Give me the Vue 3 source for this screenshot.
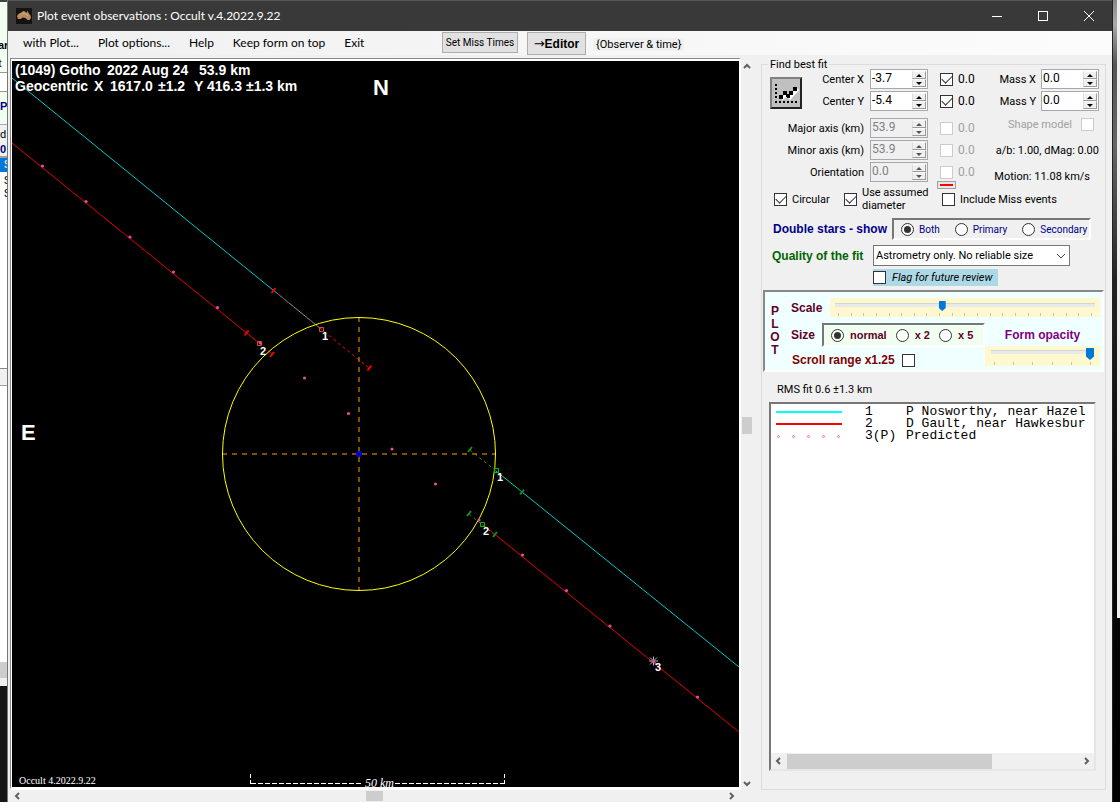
<script setup>
import { ref } from 'vue'

const menus = ['with Plot...', 'Plot options...', 'Help', 'Keep form on top', 'Exit']

const fitRows = ref([
  { id: 'cx', label: 'Center X', value: '-3.7', sigma: '0.0', on: true, off: false, row: 1 },
  { id: 'cy', label: 'Center Y', value: '-5.4', sigma: '0.0', on: true, off: false, row: 2 },
  { id: 'major', label: 'Major axis (km)', value: '53.9', sigma: '0.0', on: false, off: true, row: 4 },
  { id: 'minor', label: 'Minor axis (km)', value: '53.9', sigma: '0.0', on: false, off: true, row: 5 },
  { id: 'orient', label: 'Orientation', value: '0.0', sigma: '0.0', on: false, off: true, row: 6 }
])
const massRows = ref([
  { id: 'mx', label: 'Mass X', value: '0.0' },
  { id: 'my', label: 'Mass Y', value: '0.0' }
])

const circular = ref(true)
const assumed = ref(true)
const misses = ref(false)
const shape = ref(false)
const flag = ref(false)
const scrollRange = ref(false)
const star = ref('Both')
const size = ref('normal')
const scale = ref(8.2)
const opacity = ref(100)

const predicted = [
  [42.5, 166], [86, 201.5], [130, 237], [173.5, 272], [217.5, 307.5], [260.5, 343],
  [304.5, 378], [348.5, 413.5], [392, 449], [435.5, 484], [479, 520], [522.5, 555],
  [566.5, 590.5], [610, 626], [653.5, 661], [697.5, 697]
]
const redTicks = [[273.5, 290.5], [369.5, 368], [246.5, 333], [272, 354.5]]
const greenTicks = [[470, 449.5], [522, 492], [469, 513.5], [495, 534.5]]
const chordLabels = [
  [322, 340, '1'], [260, 355, '2'], [497, 481, '1'], [483, 535, '2'], [655, 671, '3']
]
const chords = [
  { kind: 'cyan', no: '1', name: 'P Nosworthy, near Hazel' },
  { kind: 'red', no: '2', name: 'D Gault, near Hawkesbur' },
  { kind: 'dots', no: '3(P)', name: 'Predicted' }
]
</script>

<template>
  <div class="desktop">
    <div class="behind-left" aria-hidden="true">
      <div class="bl green"><b>ar</b><b class="maroon">t</b></div>
      <div class="bl gap"></div>
      <div class="bl green2"><b>P|</b></div>
      <div class="bl head"><span>d</span><b>0</b></div>
      <div class="bl sel">S</div>
      <div class="bl rows"><span>S</span><span>S</span></div>
      <div class="bl bar"></div>
      <div class="bl blank"></div>
      <div class="bl bar2"></div>
      <div class="bl dark"></div>
    </div>

    <div class="window">
      <header class="titlebar">
        <svg class="app-icon" viewBox="0 0 16 16" aria-hidden="true">
          <rect width="16" height="16" fill="#15130f" />
          <path d="M1 8 3 5.500 5.500 4.500 7 3 9 3.200 9.500 4.500 10.700 4.500 11.500 2.800 12.500 5 14.500 7.500 15 10 13.500 12 11.500 12 9.500 10 7 9.600 4.500 11 2 11Z" fill="#b98c62" />
          <path d="M4 7 7 5 10 6 12 8" fill="none" stroke="#d3a777" />
        </svg>
        <h1>Plot event observations : Occult v.4.2022.9.22</h1>
        <div class="win-buttons">
          <button aria-label="Minimize"><svg viewBox="0 0 12 12"><path d="M1 6.500H11" /></svg></button>
          <button aria-label="Maximize"><svg viewBox="0 0 12 12"><rect x="1.500" y="1.500" width="9" height="9" /></svg></button>
          <button aria-label="Close"><svg viewBox="0 0 12 12"><path d="M1 1 11 11M11 1 1 11" /></svg></button>
        </div>
      </header>

      <div class="menubar">
        <nav>
          <button v-for="m in menus" :key="m">{{ m }}</button>
        </nav>
        <button class="tool small">Set Miss Times</button>
        <button class="tool editor"><span>→</span>Editor</button>
        <span class="observer">{Observer &amp; time}</span>
      </div>

      <main>
        <section class="plot-area">
          <div class="plot-frame">
            <svg class="plot" viewBox="12 61 727 726" preserveAspectRatio="xMidYMid meet" role="img" aria-label="Occultation chords">
              <g fill="none">
                <path d="M12 78 321 329M496 471 739 667" stroke="#00c8c8" />
                <path d="M12 143 259 343M482 524 739 732" stroke="#e60000" />
                <path d="M273 290 321 329 369 368M259 343 272 354" stroke="#ff0000" stroke-dasharray="3 3" />
                <path d="M470 450 522 492M469 514 495 535" stroke="#1e8a1e" stroke-dasharray="3 3" />
                <g stroke="#ffa500" stroke-dasharray="5 5">
                  <path d="M222 454H496" />
                  <path d="M359 317V591" />
                </g>
                <circle cx="359" cy="454" r="136.500" stroke="#ffff00" />
                <circle cx="359" cy="454" r="2" stroke="#0000ff" stroke-width="2" />
                <path v-for="(t, i) in redTicks" :key="'r' + i" :d="`M${t[0] - 2} ${t[1] + 2.5}l4-5`" stroke="#ff0000" stroke-width="2" />
                <path v-for="(t, i) in greenTicks" :key="'g' + i" :d="`M${t[0] - 2} ${t[1] + 2.5}l4-5`" stroke="#1f8b24" stroke-width="2" />
                <path d="M319.500 327.500h4v4h-4zM257.500 341.500h4v4h-4z" stroke="#e04838" />
                <path d="M494.500 468.500h4v4h-4zM480.500 522.500h4v4h-4z" stroke="#00c000" />
                <path d="M653.500 656.500v9M649 661h9M650 657.500l7 7M657 657.500l-7 7" stroke="#a8b4c4" />
              </g>
              <circle v-for="(p, i) in predicted" :key="'p' + i" :cx="p[0]" :cy="p[1]" r="1.600" fill="#e0509a" />
              <g class="bold" fill="#fff">
                <g class="heading">
                  <text x="15" y="75">(1049) Gotho</text>
                  <text x="107" y="75">2022 Aug 24</text>
                  <text x="199" y="75">53.9 km</text>
                  <text x="15" y="91">Geocentric</text>
                  <text x="94" y="91">X</text>
                  <text x="110" y="91">1617.0</text>
                  <text x="158" y="91">±1.2</text>
                  <text x="194" y="91">Y</text>
                  <text x="207" y="91">416.3</text>
                  <text x="246" y="91">±1.3 km</text>
                </g>
                <text class="compass" x="373" y="95">N</text>
                <text class="compass" x="21" y="440">E</text>
                <text v-for="(l, i) in chordLabels" :key="'l' + i" class="chord-no" :x="l[0]" :y="l[1]">{{ l[2] }}</text>
              </g>
              <g class="serif" fill="#fff">
                <text x="19" y="784">Occult 4.2022.9.22</text>
                <text class="km" x="365" y="787">50 km</text>
              </g>
              <path d="M250.500 774V784" fill="none" stroke="#fff" stroke-dasharray="4 2" />
              <path d="M504.500 774V784" fill="none" stroke="#fff" stroke-dasharray="4 2" />
              <path d="M251 783.500H362M395 783.500H504" fill="none" stroke="#fff" stroke-dasharray="5 2" />
            </svg>
          </div>
          <div class="vbar">
            <button aria-label="Scroll up"><svg viewBox="0 0 8 8"><path d="M1 6 4 3 7 6" /></svg></button>
            <div class="track"><i></i></div>
            <button aria-label="Scroll down"><svg viewBox="0 0 8 8"><path d="M1 2 4 5 7 2" /></svg></button>
          </div>
          <div class="hbar">
            <button aria-label="Scroll left"><svg viewBox="0 0 8 8"><path d="M6 1 3 4 6 7" /></svg></button>
            <div class="track"><i></i></div>
            <button aria-label="Scroll right"><svg viewBox="0 0 8 8"><path d="M2 1 5 4 2 7" /></svg></button>
          </div>
        </section>

        <fieldset class="fit">
          <legend>Find best fit</legend>

          <div class="params">
            <div class="grid">
              <button class="solve" aria-label="Fit">
                <svg viewBox="0 0 28 28" aria-hidden="true">
                  <path d="M3 5h2v2H3zM3 9h2v2H3zM3 13h2v2H3zM3 17h2v2H3zM3 22h2v2H3zM7 22h2v2H7zM11 22h2v2h-2zM15 22h2v2h-2zM19 22h2v2h-2zM23 22h2v2h-2z" />
                  <path d="M10 20 14 16 18 19 26 10" fill="none" stroke="#fff" stroke-width="3" />
                  <path d="M7 16h4v4H7zM11 12h4v4h-4zM15 16h3v3h-3zM17 12h4v4h-4zM21 8h4v4h-4zM14 15h3v3h-3z" />
                </svg>
              </button>
              <template v-for="r in fitRows" :key="r.id">
                <label class="name" :class="'row' + r.row" :for="r.id">{{ r.label }}</label>
                <div class="spin" :class="['row' + r.row, { off: r.off }]">
                  <input :id="r.id" v-model="r.value" type="text" :disabled="r.off" />
                  <span><button :disabled="r.off" :aria-label="r.label + ' up'"></button><button class="down" :disabled="r.off" :aria-label="r.label + ' down'"></button></span>
                </div>
                <label class="sigma" :class="['row' + r.row, { off: r.off }]"><input v-model="r.on" type="checkbox" :disabled="r.off" />{{ r.sigma }}</label>
              </template>
              <button class="colour" aria-label="Line colour"><i></i></button>
            </div>
            <div class="extra">
              <div v-for="r in massRows" :key="r.id" class="mass">
                <label :for="r.id">{{ r.label }}</label>
                <div class="spin">
                  <input :id="r.id" v-model="r.value" type="text" />
                  <span><button :aria-label="r.label + ' up'"></button><button class="down" :aria-label="r.label + ' down'"></button></span>
                </div>
              </div>
              <label class="shape">Shape model<input v-model="shape" type="checkbox" disabled /></label>
              <p class="ab">a/b: 1.00, dMag: 0.00</p>
              <p class="motion">Motion: 11.08 km/s</p>
            </div>
          </div>

          <div class="checks">
            <label><input v-model="circular" type="checkbox" />Circular</label>
            <label class="two"><input v-model="assumed" type="checkbox" /><span>Use assumed<br />diameter</span></label>
            <label><input v-model="misses" type="checkbox" />Include Miss events</label>
          </div>

          <div class="double" role="radiogroup" aria-labelledby="dbl">
            <b id="dbl">Double stars - show</b>
            <div class="sunken">
              <label v-for="s in ['Both', 'Primary', 'Secondary']" :key="s"><input v-model="star" type="radio" name="star" :value="s" />{{ s }}</label>
            </div>
          </div>

          <div class="quality">
            <label for="quality">Quality of the fit</label>
            <div class="choose">
              <select id="quality"><option>Astrometry only. No reliable size</option></select>
              <svg viewBox="0 0 10 6" aria-hidden="true"><path d="M1 1 5 5 9 1" /></svg>
            </div>
          </div>
          <label class="flag"><input v-model="flag" type="checkbox" />Flag for future review</label>

          <section class="plot-box">
            <div class="plot-word"><span>P</span><span>L</span><span>O</span><span>T</span></div>
            <div class="plot-controls">
              <div class="scale-row">
                <label for="scale">Scale</label>
                <div class="slider">
                  <input id="scale" v-model="scale" type="range" min="0" max="20" step="any" />
                  <div class="ticks"><i v-for="n in 21" :key="n"></i></div>
                </div>
              </div>
              <div class="lower">
                <div class="lower-left">
                  <div class="size-row">
                    <span>Size</span>
                    <div class="sunken sizes">
                      <label v-for="s in ['normal', 'x 2', 'x 5']" :key="s"><input v-model="size" type="radio" name="size" :value="s" />{{ s }}</label>
                    </div>
                  </div>
                  <label class="range">Scroll range x1.25<input v-model="scrollRange" type="checkbox" /></label>
                </div>
                <div class="opacity">
                  <label for="opacity">Form opacity</label>
                  <div class="slider big">
                    <input id="opacity" v-model="opacity" type="range" min="0" max="100" />
                    <div class="ticks"><i v-for="n in 6" :key="n"></i></div>
                  </div>
                </div>
              </div>
            </div>
          </section>

          <p class="rms">RMS fit 0.6 ±1.3 km</p>

          <div class="list">
            <ul>
              <li v-for="c in chords" :key="c.no">
                <svg viewBox="0 0 66 12" aria-hidden="true">
                  <path v-if="c.kind === 'cyan'" d="M0 6H66" stroke="#00ffff" stroke-width="2" />
                  <path v-else-if="c.kind === 'red'" d="M0 6H66" stroke="#ff0000" stroke-width="2" />
                  <g v-else fill="none" stroke="#ff69b4"><circle v-for="n in 5" :key="n" :cx="15 * n - 12.5" cy="6.500" r="1" /></g>
                </svg>
                <span>{{ c.no }}</span><span>{{ c.name }}</span>
              </li>
            </ul>
            <div class="hbar inner">
              <button aria-label="Scroll list left"><svg viewBox="0 0 8 8"><path d="M6 1 3 4 6 7" /></svg></button>
              <div class="track"><i></i></div>
              <button aria-label="Scroll list right"><svg viewBox="0 0 8 8"><path d="M2 1 5 4 2 7" /></svg></button>
            </div>
          </div>
        </fieldset>
      </main>
    </div>
    <div class="behind-right" aria-hidden="true"><i></i></div>
  </div>
</template>

<style>
body { margin: 0; background: #fff; }
</style>

<style scoped>
* { box-sizing: border-box; }
.desktop { display: flex; height: calc(100vh - 8px); min-height: 720px; overflow: hidden; font: 11px/13px Roboto, "Liberation Sans", sans-serif; color: #000; }
button { font: inherit; color: inherit; padding: 0; margin: 0; border: 0; background: none; }
input { margin: 0; font: inherit; }
p, h1, ul { margin: 0; padding: 0; font-weight: normal; }
b { font-family: "Liberation Sans", sans-serif; }

.behind-left { flex: 0 0 8px; overflow: hidden; display: flex; flex-direction: column; background: #fff; border-right: 1px solid #777; }
.bl { flex: none; overflow: hidden; display: flex; flex-direction: column; font-size: 11px; }
.green { height: 73px; background: #f0fff0; border-top: 2px solid #444; border-bottom: 1px solid #999; padding-top: 37px; gap: 5px; }
.green b { margin-left: -2px; }
.maroon { color: #800040; }
.gap { height: 18px; background: #fff; }
.green2 { height: 34px; background: #f0fff0; border-top: 1px solid #999; border-bottom: 1px solid #aaa; padding-top: 8px; color: #000080; }
.head { height: 33px; background: #f0f0f0; border-bottom: 2px solid #a0a0a0; padding-top: 3px; gap: 2px; }
.head b { color: #000080; }
.sel { height: 14px; background: #0078d7; color: #fff; padding-left: 4px; }
.rows { height: 197px; padding: 2px 0 0 4px; border-bottom: 1px solid #828790; }
.bar { height: 17px; background: #f0f0f0; border-bottom: 1px solid #a0a0a0; }
.blank { flex: 1 1 275px; }
.bar2 { height: 24px; background: #cdcdcd; border-bottom: 8px solid #eee; }
.dark { height: 116px; background: #161616; }

.behind-right { flex: 0 0 8px; display: flex; background: linear-gradient(#888 0, #aaa 3%, #555 8%, #666 18%, #222 35%, #0a0a0a 60%, #000); border-left: 1px solid #222; }
.behind-right i { margin-left: auto; width: 3px; height: 77%; background: #eee; }

.window { flex: 1; min-width: 0; display: flex; flex-direction: column; background: #f0f0f0; }
.titlebar { flex: 0 0 31px; display: flex; align-items: center; padding-left: 8px; background: #393939; border-top: 1px solid #555; color: #fff; }
.app-icon { width: 16px; height: 16px; margin-right: 5px; }
.titlebar h1 { font: 12px/16px Lato, "Noto Sans", sans-serif; }
.win-buttons { margin-left: auto; display: flex; }
.win-buttons button { width: 46px; height: 30px; display: grid; place-items: center; }
.win-buttons svg { width: 12px; height: 12px; fill: none; stroke: #fff; }

.menubar { flex: 0 0 24px; display: flex; align-items: flex-start; background: linear-gradient(90deg, #f0f0f0, #fcfcfc); }
.menubar nav { flex: 0 0 434px; height: 24px; padding-left: 15px; display: flex; align-items: center; gap: 19px; font: 12px/16px Lato, "Noto Sans", sans-serif; }
.tool { background: #e1e1e1; border: 1px solid #adadad; margin-top: 1px; }
.small { width: 76px; height: 21px; font-size: 10px; }
.editor { width: 59px; height: 23px; margin-left: 9px; font: bold 12px/16px "Liberation Sans", sans-serif; }
.editor span { font: 13px/16px "DejaVu Sans", sans-serif; }
.observer { margin: 7px 0 0 7px; padding: 0 3px; background: #f0f0f0; }

main { flex: 1; min-height: 0; display: flex; padding: 3px 6px 0 2px; }
.plot-area { flex: 1; min-width: 0; display: grid; grid-template-columns: minmax(0, 1fr) 16px; grid-template-rows: minmax(0, 1fr) 12px; }
.plot-frame { min-height: 0; border: 1px solid; border-color: #888 #fff #fff #888; border-right-width: 2px; border-bottom-width: 3px; padding: 2px 0 0 1px; background: #fff; }
.plot { display: block; width: 100%; height: 100%; background: #000; }
.bold { font-family: "Liberation Sans", sans-serif; font-weight: bold; }
.heading { font-size: 14px; }
.compass { font-size: 22px; }
.chord-no { font-size: 11px; }
.serif { font: 10px "Liberation Serif", serif; }
.km { font-size: 12px; font-style: italic; }

.vbar { display: flex; flex-direction: column; align-items: center; padding: 2px 4px 0 0; }
.hbar { display: flex; align-items: center; padding-right: 2px; }
.vbar button, .hbar button { display: grid; place-items: center; width: 14px; height: 12px; }
.vbar svg, .hbar svg { width: 8px; height: 8px; fill: none; stroke: #606060; stroke-width: 2; }
.track { flex: 1; display: flex; align-items: center; justify-content: center; align-self: stretch; }
.vbar .track i { width: 10px; height: 17px; background: #cdcdcd; }
.hbar .track i { width: 17px; height: 10px; background: #cdcdcd; }

.fit { flex: 0 0 345px; min-width: 0; margin: 1px 0 12px 4px; padding: 0 1px; border: 1px solid #dcdcdc; display: flex; flex-direction: column; }
.fit legend { margin-left: 5px; padding: 1px 2px 0; line-height: 10px; }

.params { display: flex; justify-content: space-between; margin-top: -1px; padding: 0 5px 0 7px; }
.grid { display: grid; grid-template-columns: 94px 58px 36px; grid-template-rows: 20px 20px 3px 20px 20px 20px 6px; row-gap: 2px; align-items: center; }
.row1 { grid-row: 1; } .row2 { grid-row: 2; } .row4 { grid-row: 4; } .row5 { grid-row: 5; } .row6 { grid-row: 6; }
.name { grid-column: 1; justify-self: end; z-index: 1; }
.spin { grid-column: 2; margin-left: 6px; width: 58px; height: 20px; display: flex; background: #fff; border: 1px solid #a5a8ad; }
.spin input { flex: 1; min-width: 0; border: 0; padding: 0 0 2px 1px; background: none; font-size: 12px; color: inherit; }
.spin span { width: 16px; display: flex; flex-direction: column; padding: 1px; }
.spin span button { flex: 1; background: #f0f0f0; border: 1px solid; border-color: #fafafa #9a9a9a #9a9a9a #ddd; display: grid; place-items: center; }
.spin span button::before { content: ""; border: 3px solid transparent; border-top: 0; border-bottom-color: currentColor; }
.spin span button.down::before { border: 3px solid transparent; border-bottom: 0; border-top-color: currentColor; }
.spin.off { background: #f0f0f0; color: #808080; }
.off button { color: #555; }
.sigma { grid-column: 3; margin-left: 18px; display: flex; align-items: center; gap: 5px; font-size: 12px; white-space: nowrap; }
.sigma.off { color: #a0a0a0; }
.solve { grid-column: 1; grid-row: 1 / 3; align-self: end; width: 32px; height: 32px; margin-bottom: 2px; background: #c0c0c0; border: 2px solid; border-color: #808080 #222 #222 #808080; }
.solve svg { display: block; width: 28px; height: 28px; }
.colour { grid-column: 3; grid-row: 7; width: 19px; height: 8px; margin: -4px 0 0 15px; border: 1px solid #a0a0a0; background: #e8e8e8; display: grid; place-items: center; }
.colour i { width: 13px; height: 2px; background: #f00; }

.extra { display: flex; flex-direction: column; gap: 2px; align-items: flex-end; }
.mass { display: flex; align-items: center; height: 20px; }
.mass .spin { margin-left: 5px; }
.shape { height: 22px; display: flex; align-items: center; gap: 9px; color: #a0a0a0; padding-right: 5px; }
.ab { line-height: 28px; }
.motion { line-height: 20px; padding-right: 9px; }

input[type="checkbox"], input[type="radio"] { appearance: none; flex: none; width: 13px; height: 13px; border: 1px solid #333; background: #fff; display: grid; place-items: center; }
input[type="checkbox"]:checked::before { content: ""; width: 9px; height: 5px; margin-top: -3px; border: solid #333; border-width: 0 0 1px 1px; rotate: -45deg; }
input[type="checkbox"]:disabled { border-color: #ccc; }
input[type="radio"] { border-radius: 50%; }
input[type="radio"]:checked::before { content: ""; width: 7px; height: 7px; border-radius: 50%; background: #333; }

.checks { display: grid; grid-template-columns: 70px 98px auto; padding-left: 11px; height: 24px; margin-top: -4px; align-items: center; }
.checks label { display: flex; align-items: center; gap: 5px; white-space: nowrap; }

.double { display: flex; align-items: center; padding-left: 10px; margin-top: 8px; color: #00008b; }
.double b { width: 119px; font-size: 12px; white-space: nowrap; }
.sunken { display: flex; align-items: center; border: 2px solid; border-color: #777 #fff #fff #777; }
.double .sunken { width: 199px; height: 22px; padding-left: 7px; font-size: 10px; gap: 15px; }
.sunken label { display: flex; align-items: center; gap: 5px; white-space: nowrap; }

.quality { display: flex; align-items: center; padding-left: 9px; margin-top: 5px; }
.quality label { width: 101px; color: #006400; font: bold 12px/14px "Liberation Sans", sans-serif; white-space: nowrap; }
.choose { position: relative; width: 197px; height: 21px; }
.choose select { appearance: none; width: 100%; height: 100%; padding: 0 20px 0 2px; border: 1px solid #777; border-radius: 0; background: #fff; font: inherit; color: #000; }
.choose svg { position: absolute; right: 4px; top: 8px; width: 10px; height: 6px; fill: none; stroke: #444; pointer-events: none; }
.flag { align-self: flex-start; margin: 3px 0 0 110px; width: 125px; height: 17px; display: flex; align-items: center; gap: 6px; background: #add8e6; font-style: italic; white-space: nowrap; }

.plot-box { display: flex; margin-top: 4px; height: 82px; border: 2px solid; border-color: #888 #fff #fff #888; background: #f0ffff; font: bold 12px/14px "Liberation Sans", sans-serif; color: #60002c; }
.plot-word { width: 20px; padding-top: 13px; display: flex; flex-direction: column; align-items: center; line-height: 13px; }
.plot-controls { flex: 1; min-width: 0; padding: 6px 2px 0 6px; display: flex; flex-direction: column; }
.scale-row { display: flex; align-items: center; }
.scale-row label { width: 39px; }
.slider { flex: 1; height: 19px; padding: 3px 5px 0; background: #fff8ce; display: flex; flex-direction: column; justify-content: space-between; }
.slider input { appearance: none; display: block; width: 100%; height: 10px; background: linear-gradient(#d4d4d4, #d4d4d4) 0 2px / 100% 1px no-repeat, linear-gradient(#e7eaea, #e7eaea) 0 2px / 100% 4px no-repeat; }
.slider input::-webkit-slider-thumb { appearance: none; width: 7px; height: 10px; background: #0078d7; clip-path: polygon(0 0, 100% 0, 100% 70%, 50% 100%, 0 70%); }
.ticks { display: flex; justify-content: space-between; padding: 0 3px 1px; }
.ticks i { width: 1px; height: 3px; background: #c4c4c4; }
.lower { display: flex; justify-content: space-between; }
.size-row { display: flex; align-items: center; padding-top: 6px; }
.size-row > span { width: 31px; }
.sizes { width: 163px; height: 24px; padding-left: 7px; gap: 9px; background: #f0fff0; }
.sizes label { gap: 6px; }
.range { display: flex; align-items: center; gap: 7px; margin: 6px 0 0 1px; color: #800000; white-space: nowrap; }
.opacity { width: 115px; padding-top: 11px; text-align: center; color: #800080; }
.opacity label { display: block; }
.big { height: 20px; margin-top: 4px; padding: 2px 6px 0; text-align: left; }
.big input { height: 12px; }
.big input::-webkit-slider-thumb { width: 8px; height: 12px; }
.sizes label { font-size: 11px; }

.rms { padding-left: 14px; margin: 11px 0 6px; }
.list { flex: 1; min-height: 0; margin: 0 8px 18px 6px; display: flex; flex-direction: column; background: #fff; border: 2px solid; border-color: #777 #e6e6e6 #e6e6e6 #777; }
.list ul { flex: 1; list-style: none; padding: 2px 0 0 5px; overflow: hidden; }
.list li { display: grid; grid-template-columns: 89px 41px auto; align-items: center; height: 12px; font: 13px/12px "Liberation Mono", monospace; white-space: pre; }
.list li svg { width: 66px; height: 12px; }
.inner { height: 16px; background: #f0f0f0; padding: 0; }
.inner .track { justify-content: flex-start; padding-left: 2px; }
.inner .track i { width: 70%; height: 15px; }
</style>
